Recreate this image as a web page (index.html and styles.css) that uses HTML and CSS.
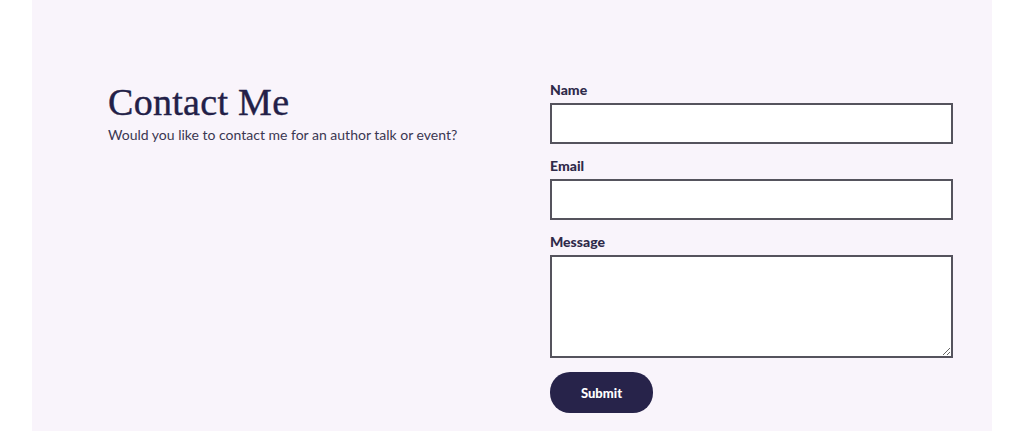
FILE: index.html
```html
<!DOCTYPE html>
<html lang="en">
<head>
<meta charset="utf-8">
<title>Contact Me</title>
<link rel="stylesheet" href="styles.css">
</head>
<body>
<div class="page">
  <section class="panel">
    <div class="intro">
      <h1 class="title">Contact Me</h1>
      <p class="lead">Would you like to contact me for an author talk or event?</p>
    </div>
    <form class="form">
      <div class="field">
        <label class="label" for="name">Name</label>
        <input class="input" id="name" type="text">
      </div>
      <div class="field">
        <label class="label" for="email">Email</label>
        <input class="input" id="email" type="email">
      </div>
      <div class="field">
        <label class="label" for="message">Message</label>
        <textarea class="textarea" id="message"></textarea>
      </div>
      <button class="submit" type="button">Submit</button>
    </form>
  </section>
</div>
</body>
</html>
```

FILE: styles.css
```css
html, body {
  margin: 0;
  padding: 0;
  background: #ffffff;
}
.page {
  padding: 0 32px;
}
.panel {
  background: #f9f4fb;
  display: flex;
  padding: 79px 39px 18px 76px;
  min-height: 431px;
  box-sizing: border-box;
}
.intro {
  width: 442px;
  flex: none;
  padding-top: 2px;
}
.title {
  margin: 0;
  font-family: "Liberation Serif", serif;
  font-weight: normal;
  font-size: 38px;
  line-height: 42px;
  color: #231f48;
  letter-spacing: 0.3px;
  -webkit-text-stroke: 0.4px #231f48;
}
.lead {
  margin: 2px 0 0;
  font-family: Lato, sans-serif;
  font-size: 14px;
  line-height: 20px;
  color: #3b3752;
}
.form {
  width: 403px;
  flex: none;
  display: flex;
  flex-direction: column;
}
.field {
  display: flex;
  flex-direction: column;
  margin-bottom: 11px;
}
.label {
  font-family: Lato, sans-serif;
  font-weight: 900;
  font-size: 14px;
  line-height: 20px;
  padding-top: 1px;
  color: #2f2a4a;
  margin-bottom: 3px;
}
.input, .textarea {
  box-sizing: border-box;
  width: 403px;
  border: 2px solid #55535d;
  background: #ffffff;
  border-radius: 0;
  margin: 0;
  font-family: Lato, sans-serif;
  font-size: 14px;
}
.input {
  height: 41px;
}
.textarea {
  height: 103px;
}
.submit {
  margin-top: 3px;
  width: 103px;
  height: 41px;
  border: none;
  border-radius: 20px;
  background: #27234a;
  color: #ffffff;
  font-family: Lato, sans-serif;
  font-weight: 900;
  font-size: 13px;
}
```
